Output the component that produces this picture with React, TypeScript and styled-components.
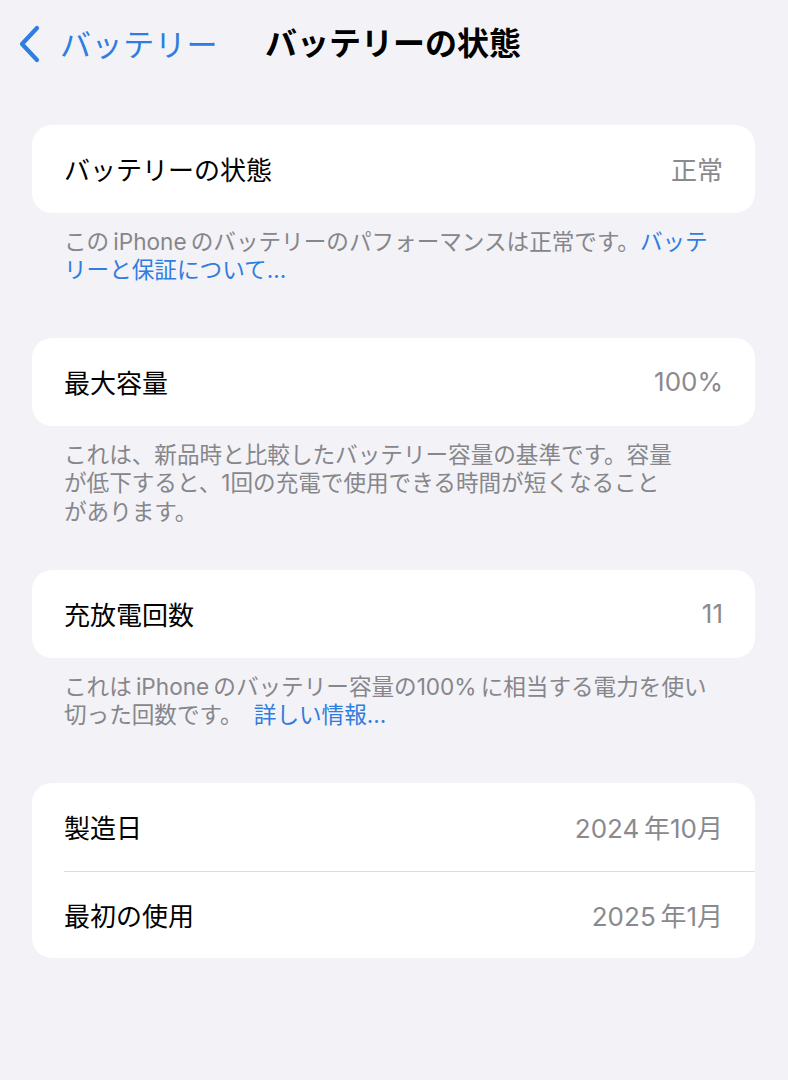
import styled, { createGlobalStyle } from "styled-components";

const GlobalStyle = createGlobalStyle`
  html, body {
    margin: 0;
    padding: 0;
    background: #f2f2f7;
  }
  body {
    font-family: Inter, "Noto Sans CJK JP", "Noto Sans", sans-serif;
    -webkit-font-smoothing: antialiased;
  }
`;

const Page = styled.div`
  width: 788px;
  min-height: 1080px;
  background: #f2f2f7;
`;

const NavBar = styled.div`
  height: 88px;
  display: flex;
  align-items: center;
  padding-left: 16px;
  box-sizing: border-box;
`;

const BackButton = styled.div`
  display: flex;
  align-items: center;
  gap: 18px;
  color: #2f7de1;
`;

const BackLabel = styled.span`
  font-size: 31px;
  line-height: 1;
  letter-spacing: 0.6px;
`;

const Title = styled.h1`
  margin: 0 0 0 47px;
  font-size: 32px;
  font-weight: 700;
  color: #000;
  line-height: 1;
`;

const Content = styled.div`
  padding: 37px 33px 0 32px;
  display: flex;
  flex-direction: column;
  gap: 44px;
`;

const Section = styled.div`
  display: flex;
  flex-direction: column;
`;

const Card = styled.div`
  background: #fff;
  border-radius: 20px;
  overflow: hidden;
`;

const Row = styled.div<{ $divider?: boolean }>`
  position: relative;
  height: 87.5px;
  display: flex;
  align-items: center;
  justify-content: space-between;
  padding: 0 32px 0 32px;
  box-sizing: border-box;

  &::before {
    content: "";
    display: ${(p) => (p.$divider ? "block" : "none")};
    position: absolute;
    top: 0;
    left: 32px;
    right: 0;
    height: 1px;
    background: #dcdce0;
  }
`;

const Label = styled.span`
  font-size: 26px;
  color: #000;
`;

const Value = styled.span`
  font-size: 26px;
  color: #8a8a8e;
`;

const Footer = styled.p`
  margin: 15px 0 0;
  min-height: 66.5px;
  padding: 0 32px;
  font-size: 22.6px;
  line-height: 28.5px;
  color: #86868b;
`;

const Link = styled.span`
  color: #2f7de1;
`;

const sections = [
  {
    rows: [{ label: "バッテリーの状態", value: "正常" }],
    footer: (
      <>
        この&#8201;iPhone&#8201;のバッテリーのパフォーマンスは正常です。
        <Link>バッテ</Link>
        <br />
        <Link>リーと保証について...</Link>
      </>
    ),
  },
  {
    rows: [{ label: "最大容量", value: "100%" }],
    footer: (
      <>
        これは、新品時と比較したバッテリー容量の基準です。容量
        <br />
        が低下すると、1回の充電で使用できる時間が短くなること
        <br />
        があります。
      </>
    ),
  },
  {
    rows: [{ label: "充放電回数", value: "11" }],
    footer: (
      <>
        これは&#8201;iPhone&#8201;のバッテリー容量の100%&#8201;に相当する電力を使い
        <br />
        切った回数です。&#8194;<Link>詳しい情報...</Link>
      </>
    ),
  },
  {
    rows: [
      { label: "製造日", value: "2024\u2009年10月" },
      { label: "最初の使用", value: "2025\u2009年1月" },
    ],
    footer: null,
  },
];

const App = () => {
  return (
    <Page>
      <GlobalStyle />
      <NavBar>
        <BackButton>
          <svg width="26" height="38" viewBox="0 0 26 38">
            <path
              d="M21 3 L6 19 L21 35"
              fill="none"
              stroke="#2f7de1"
              strokeWidth="4.2"
              strokeLinecap="round"
              strokeLinejoin="round"
            />
          </svg>
          <BackLabel>バッテリー</BackLabel>
        </BackButton>
        <Title>バッテリーの状態</Title>
      </NavBar>
      <Content>
        {sections.map((section, i) => (
          <Section key={i}>
            <Card>
              {section.rows.map((row, j) => (
                <Row key={j} $divider={j > 0}>
                  <Label>{row.label}</Label>
                  <Value>{row.value}</Value>
                </Row>
              ))}
            </Card>
            {section.footer && <Footer>{section.footer}</Footer>}
          </Section>
        ))}
      </Content>
    </Page>
  );
};

export default App;
